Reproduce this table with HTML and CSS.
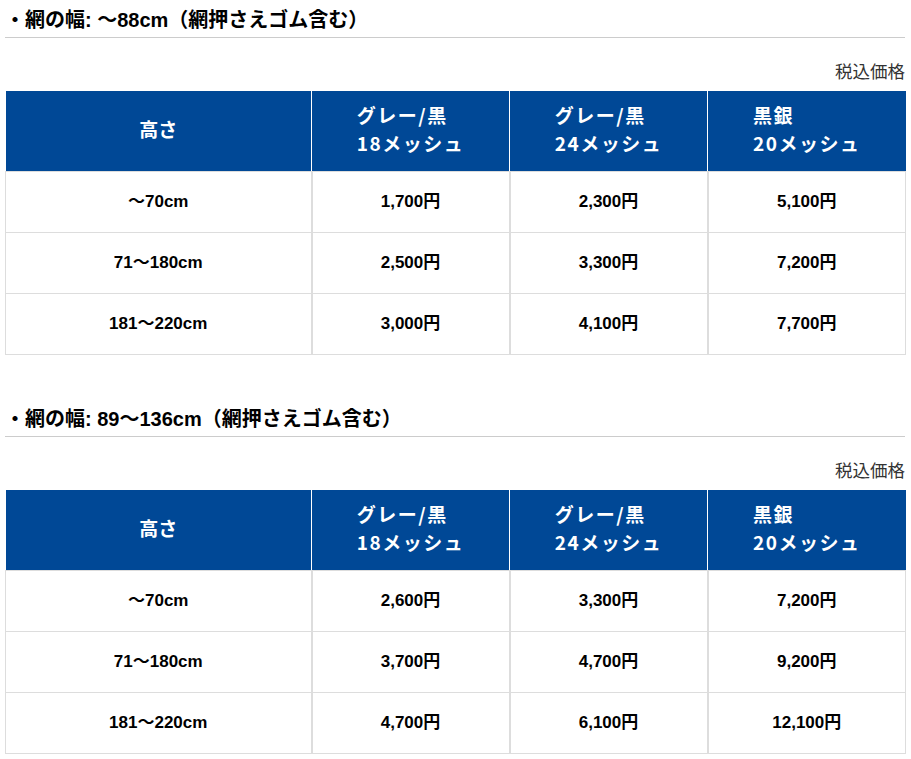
FILE: index.html
```html
<!DOCTYPE html>
<html lang="ja">
<head>
<meta charset="utf-8">
<link rel="stylesheet" href="styles.css">
</head>
<body>
<div class="wrap">
  <section class="sec">
    <h3 class="ttl">・網の幅: ～88cm（網押さえゴム含む）</h3>
    <p class="tax">税込価格</p>
    <table class="price">
      <colgroup><col class="c1"><col class="c2"><col class="c2"><col class="c2"></colgroup>
      <thead>
        <tr>
          <th>高さ</th>
          <th><span class="hb">グレー/黒<br>18メッシュ</span></th>
          <th><span class="hb">グレー/黒<br>24メッシュ</span></th>
          <th><span class="hb">黒銀<br>20メッシュ</span></th>
        </tr>
      </thead>
      <tbody>
        <tr><td>～70cm</td><td>1,700円</td><td>2,300円</td><td>5,100円</td></tr>
        <tr><td>71～180cm</td><td>2,500円</td><td>3,300円</td><td>7,200円</td></tr>
        <tr><td>181～220cm</td><td>3,000円</td><td>4,100円</td><td>7,700円</td></tr>
      </tbody>
    </table>
  </section>
  <section class="sec">
    <h3 class="ttl">・網の幅: 89～136cm（網押さえゴム含む）</h3>
    <p class="tax">税込価格</p>
    <table class="price">
      <colgroup><col class="c1"><col class="c2"><col class="c2"><col class="c2"></colgroup>
      <thead>
        <tr>
          <th>高さ</th>
          <th><span class="hb">グレー/黒<br>18メッシュ</span></th>
          <th><span class="hb">グレー/黒<br>24メッシュ</span></th>
          <th><span class="hb">黒銀<br>20メッシュ</span></th>
        </tr>
      </thead>
      <tbody>
        <tr><td>～70cm</td><td>2,600円</td><td>3,300円</td><td>7,200円</td></tr>
        <tr><td>71～180cm</td><td>3,700円</td><td>4,700円</td><td>9,200円</td></tr>
        <tr><td>181～220cm</td><td>4,700円</td><td>6,100円</td><td>12,100円</td></tr>
      </tbody>
    </table>
  </section>
</div>
</body>
</html>
```
FILE: styles.css
```css
html, body {
  margin: 0;
  padding: 0;
  background: #fff;
}
body {
  font-family: "Liberation Sans", "Noto Sans CJK JP", sans-serif;
  color: #000;
}
.wrap {
  width: 900px;
  margin: 0 5px;
}
.sec {
  margin-bottom: 44px;
}
.sec:last-child {
  margin-bottom: 0;
}
.ttl {
  margin: 0;
  padding: 8px 0 5px;
  font-size: 20px;
  font-weight: bold;
  line-height: 24px;
  border-bottom: 1px solid #ccc;
}
.tax {
  margin: 12px 0 0;
  text-align: right;
  font-size: 17.5px;
  line-height: 41px;
  color: #333;
  font-family: "Noto Sans CJK JP", sans-serif;
}
.price {
  width: 900px;
  border-collapse: collapse;
  table-layout: fixed;
}
.c1 { width: 306px; }
.c2 { width: 198px; }
.price th {
  background: #004896;
  color: #fff;
  height: 75px;
  padding: 0 0 5px;
  font-family: "Noto Sans CJK JP", sans-serif;
  font-size: 19px;
  font-weight: bold;
  line-height: 28px;
  text-align: center;
  border-left: 1px solid #fff;
}
.price th:first-child { border-left: 0; }
.hb {
  display: inline-block;
  text-align: left;
  letter-spacing: 0.08em;
}
.price td {
  height: 55px;
  padding: 0 0 5px;
  text-align: center;
  font-size: 17px;
  font-weight: bold;
  border: 1px solid #ddd;
}
.price td + td {
  border-left: 2px solid #ddd;
}
```
